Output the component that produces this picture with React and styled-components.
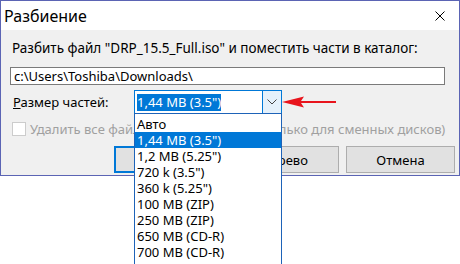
import React from 'react';
import styled, { createGlobalStyle } from 'styled-components';

const GlobalStyle = createGlobalStyle`
  html, body {
    margin: 0;
    padding: 0;
    background: #ffffff;
  }
  body {
    min-height: 264px;
    font-family: "Noto Sans", "Open Sans", sans-serif;
    font-size: 13px;
    color: #000;
  }
`;

const sizeOptions = [
  'Авто',
  '1,44 MB (3.5")',
  '1,2 MB (5.25")',
  '720 k (3.5")',
  '360 k (5.25")',
  '100 MB (ZIP)',
  '250 MB (ZIP)',
  '650 MB (CD-R)',
  '700 MB (CD-R)',
];

const selectedOption = 1;

const App = () => (
  <>
    <GlobalStyle />
    <Window>
      <TitleBar>
        <Title>Разбиение</Title>
        <CloseIcon viewBox="0 0 10 10">
          <path d="M0.5 0.5 L9.5 9.5 M9.5 0.5 L0.5 9.5" stroke="#000" strokeWidth="1" />
        </CloseIcon>
      </TitleBar>
      <Body>
        <Caption>Разбить файл "DRP_15.5_Full.iso" и поместить части в каталог:</Caption>
        <PathInput>c:\Users\Toshiba\Downloads\</PathInput>
        <SizeRow>
          <SizeLabel><u>Р</u>азмер частей:</SizeLabel>
          <Combo>
            <ComboValue>
              <Selected>{sizeOptions[selectedOption]}</Selected>
            </ComboValue>
            <ComboButton>
              <svg width="10" height="6" viewBox="0 0 10 6">
                <path d="M0.5 0.5 L5 5 L9.5 0.5" fill="none" stroke="#444" strokeWidth="1" />
              </svg>
            </ComboButton>
            <Arrow width="54" height="12" viewBox="0 0 54 12">
              <path d="M0 6 L22 0.5 L19 5 L54 5 L54 7 L19 7 L22 11.5 Z" fill="#e8141c" />
            </Arrow>
            <DropList>
              {sizeOptions.map((opt, i) => (
                <DropItem key={opt} isSelected={i === selectedOption}>{opt}</DropItem>
              ))}
            </DropList>
          </Combo>
        </SizeRow>
        <CheckRow>
          <CheckBox />
          <CheckLabel>Удалить все файлы в целевой папке (только для сменных дисков)</CheckLabel>
        </CheckRow>
        <ButtonRow>
          <Button isDefault>OK</Button>
          <Button>Дерево</Button>
          <Button>Отмена</Button>
        </ButtonRow>
      </Body>
    </Window>
  </>
);

const Window = styled.div`
  width: 460px;
  box-sizing: border-box;
  border: 1px solid #5b64b4;
  display: flex;
  flex-direction: column;
`;

const TitleBar = styled.div`
  height: 29px;
  background: #ffffff;
  display: flex;
  align-items: center;
  justify-content: space-between;
  padding: 0 14px 0 3px;
`;

const Title = styled.span`
  font-size: 16px;
`;

const CloseIcon = styled.svg`
  width: 10px;
  height: 10px;
`;

const Body = styled.div`
  background: #f0f0f0;
  padding: 8px 4px 2px 9px;
  display: flex;
  flex-direction: column;
`;

const Caption = styled.div`
  height: 20px;
  line-height: 20px;
  padding-left: 2px;
  margin-bottom: 9px;
  font-size: 13.5px;
`;

const PathInput = styled.div`
  width: 435px;
  height: 18px;
  box-sizing: border-box;
  background: #ffffff;
  border: 1px solid #7a7a7a;
  padding-left: 3px;
  line-height: 16px;
`;

const SizeRow = styled.div`
  display: flex;
  align-items: center;
  margin-top: 5px;
  height: 24px;
`;

const SizeLabel = styled.span`
  width: 124px;
  flex-shrink: 0;
  padding-left: 3px;
  box-sizing: border-box;
  u {
    text-decoration-thickness: 1px;
  }
`;

const Combo = styled.div`
  position: relative;
  z-index: 2;
  width: 148px;
  height: 24px;
  box-sizing: border-box;
  border: 1px solid #0078d7;
  background: #ffffff;
  display: flex;
`;

const ComboValue = styled.div`
  flex: 1;
  display: flex;
  align-items: center;
  padding-left: 2px;
`;

const Selected = styled.span`
  background: #0078d7;
  color: #ffffff;
  line-height: 17px;
`;

const ComboButton = styled.div`
  width: 18px;
  background: #e5f1fb;
  border-left: 1px solid #0078d7;
  display: flex;
  align-items: center;
  justify-content: center;
`;

const Arrow = styled.svg`
  position: absolute;
  left: 147px;
  top: 5px;
`;

const DropList = styled.div`
  position: absolute;
  left: -1px;
  top: 22px;
  width: 148px;
  height: 152px;
  overflow: hidden;
  box-sizing: border-box;
  border: 1px solid #1e63b8;
  background: #ffffff;
  padding-top: 2px;
`;

const DropItem = styled.div`
  height: 16px;
  line-height: 16px;
  padding-left: 2px;
  background: ${(p) => (p.isSelected ? '#0078d7' : 'transparent')};
  color: ${(p) => (p.isSelected ? '#ffffff' : '#000000')};
  white-space: nowrap;
`;

const CheckRow = styled.div`
  display: flex;
  align-items: center;
  margin-top: 7px;
  height: 16px;
  white-space: nowrap;
  overflow: hidden;
`;

const CheckBox = styled.span`
  flex-shrink: 0;
  width: 14px;
  height: 14px;
  box-sizing: border-box;
  margin-left: 2px;
  border: 1px solid #cccccc;
  background: #ffffff;
`;

const CheckLabel = styled.span`
  margin-left: 4px;
  color: #a0a0a0;
`;

const ButtonRow = styled.div`
  display: flex;
  justify-content: flex-end;
  gap: 7px;
  margin-top: 9px;
`;

const Button = styled.div`
  width: 109px;
  height: 27px;
  box-sizing: border-box;
  background: #e1e1e1;
  border: ${(p) => (p.isDefault ? '2px solid #0078d7' : '1px solid #adadad')};
  display: flex;
  align-items: center;
  justify-content: center;
`;

export default App;
